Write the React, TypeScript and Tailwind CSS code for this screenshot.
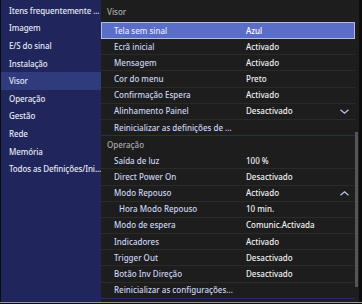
import React from "react";

const SIDEBAR = [
  "Itens frequentemente ...",
  "Imagem",
  "E/S do sinal",
  "Instalação",
  "Visor",
  "Operação",
  "Gestão",
  "Rede",
  "Memória",
  "Todos as Definições/Ini...",
];

type Row = {
  label: string;
  value?: string;
  selected?: boolean;
  indent?: boolean;
  chevron?: "down" | "up";
};

const SECTIONS: { title: string; rows: Row[] }[] = [
  {
    title: "Visor",
    rows: [
      { label: "Tela sem sinal", value: "Azul", selected: true },
      { label: "Ecrã inicial", value: "Activado" },
      { label: "Mensagem", value: "Activado" },
      { label: "Cor do menu", value: "Preto" },
      { label: "Confirmação Espera", value: "Activado" },
      { label: "Alinhamento Painel", value: "Desactivado", chevron: "down" },
      { label: "Reinicializar as definições de ..." },
    ],
  },
  {
    title: "Operação",
    rows: [
      { label: "Saída de luz", value: "100 %" },
      { label: "Direct Power On", value: "Desactivado" },
      { label: "Modo Repouso", value: "Activado", chevron: "up" },
      { label: "Hora Modo Repouso", value: "10 min.", indent: true },
      { label: "Modo de espera", value: "Comunic.Activada" },
      { label: "Indicadores", value: "Activado" },
      { label: "Trigger Out", value: "Desactivado" },
      { label: "Botão Inv Direção", value: "Desactivado" },
      { label: "Reinicializar as configurações..." },
    ],
  },
];

function Chevron({ dir }: { dir: "down" | "up" }) {
  return (
    <svg width="9" height="5" viewBox="0 0 9 5" className="shrink-0">
      <path
        d={dir === "down" ? "M0.5 0.8 L4.5 4.2 L8.5 0.8" : "M0.5 4.2 L4.5 0.8 L8.5 4.2"}
        fill="none"
        stroke="#c0c7e8"
        strokeWidth="1.2"
      />
    </svg>
  );
}

function SettingRow({ row, last }: { row: Row; last: boolean }) {
  if (row.selected) {
    return (
      <div className="flex h-[17px] items-center whitespace-nowrap border border-[#b4bce2] bg-[#5a6dc7] text-[8px] font-medium">
        <span className="w-[144px] shrink-0 pl-[12px] text-[#e4e8fa]">{row.label}</span>
        <span className="text-white">{row.value}</span>
      </div>
    );
  }
  return (
    <div
      className={
        "flex h-[16.2px] items-center whitespace-nowrap border-b text-[8px] font-medium " +
        (last ? "border-[#222d6e]" : "border-[#2a2a2a]")
      }
    >
      <span
        className={
          "w-[145px] shrink-0 text-[#ccd4f2] " +
          (row.indent ? "pl-[18px]" : "pl-[13px]")
        }
      >
        {row.label}
      </span>
      {row.value && <span className="flex-1 text-[#f2f2f2]">{row.value}</span>}
      {row.chevron && (
        <span className="pr-[6px]">
          <Chevron dir={row.chevron} />
        </span>
      )}
    </div>
  );
}

export default function App() {
  return (
    <div className="flex h-[304px] w-[362px] flex-col bg-[#0c0c0c] font-['Noto_Sans',sans-serif] leading-none">
      <div className="ml-px mr-[3px] flex min-h-0 flex-1">
        <aside className="w-[100px] shrink-0 bg-[#20265b] pt-[2px]">
          {SIDEBAR.map((s) => (
            <div
              key={s}
              className={
                "flex h-[17.6px] items-center whitespace-nowrap pl-[8px] text-[8px] font-medium tracking-[-0.1px] text-[#e4e8f6] " +
                (s === "Visor" ? "bg-[#2f3b7d]" : "")
              }
            >
              {s}
            </div>
          ))}
        </aside>
        <main className="flex min-w-0 flex-1 bg-[#1d1d1d]">
          <div className="min-w-0 flex-1">
            {SECTIONS.map((sec, i) => (
              <div key={sec.title}>
                <div
                  className={
                    "flex items-center pl-[6px] text-[8px] font-medium text-[#ababab] " +
                    (i === 0 ? "h-[22px] pt-px" : "h-[17px]")
                  }
                >
                  {sec.title}
                </div>
                {sec.rows.map((r, j) => (
                  <SettingRow key={r.label} row={r} last={j === sec.rows.length - 1} />
                ))}
              </div>
            ))}
          </div>
          <div className="w-[4px] shrink-0 pt-[132px]">
            <div className="h-[155px] w-[3px] bg-[#555555]" />
          </div>
        </main>
      </div>
      <div className="h-px bg-[#9a9a9a]" />
      <div className="h-px" />
    </div>
  );
}
